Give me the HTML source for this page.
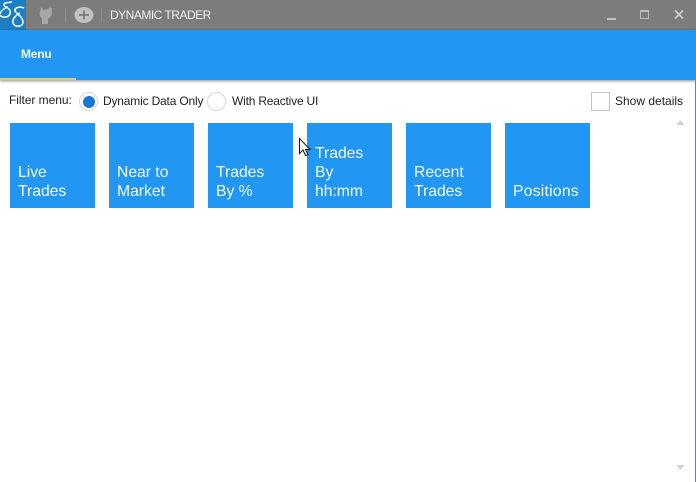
<!DOCTYPE html>
<html><head><meta charset="utf-8"><style>
html,body{margin:0;padding:0;background:#fff}
body{width:696px;height:482px;position:relative;overflow:hidden;font-family:"Liberation Sans",sans-serif}
.a{position:absolute}
.tile{position:absolute;top:123px;width:85px;height:85px;background:#2196f3;color:#f2f9ff}
.tile div{position:absolute;left:8px;bottom:7px;font-size:15.7px;line-height:19px;white-space:nowrap}
.lbl{position:absolute;font-size:12px;color:#222;line-height:14px;white-space:nowrap}
</style></head><body>
<div class="a" style="left:0;top:0;width:696px;height:30px;background:#7e7c7a"></div>
<div class="a" style="left:0;top:0;width:26px;height:30px;background:#1c7fc4"></div>
<svg class="a" style="left:0;top:0" width="120" height="30" fill="none">
<path d="M12 2L5 3C3 4 4 6 6 7C10 9 11 11 10 14C8 18 2 18 0 15" stroke="#fff" stroke-width="1.500"/>
<path d="M0 14C1 10 5 8 8 7" stroke="#fff" stroke-width="1.200"/>
<path d="M24 8C19 6 14 8 15 11C17 14 23 17 23 22C23 27 15 28 13 23C12 19 16 15 20 13" stroke="#fff" stroke-width="1.500"/>
<path d="M41 7L43 9.500H48L50 7L52 9L51.500 15Q50 18 48 18.500V24H42V18.500Q40 17 39.500 14Z" fill="#a9a7a5"/>
<rect x="65" y="8" width="1" height="14" fill="#8f8d8b"/>
<ellipse cx="84" cy="15" rx="9.500" ry="8" fill="#c4c2c0"/>
<path d="M79 15H89M84 10.500V19.500" stroke="#7e7c7a" stroke-width="1.800"/>
<rect x="101" y="8" width="1" height="14" fill="#8f8d8b"/>
</svg>
<div class="a" style="left:110px;top:8px;font-size:12px;line-height:14px;color:#efeeed;letter-spacing:-.5px">DYNAMIC TRADER</div>
<svg class="a" style="left:600px;top:0" width="96" height="30" fill="none">
<rect x="7" y="18" width="9" height="2" fill="#c4c2c0"/>
<rect x="40.500" y="10.500" width="8" height="8" stroke="#bdbbb9"/><rect x="40" y="10" width="9" height="2" fill="#bdbbb9"/>
<path d="M75 10.500L83 18.500M83 10.500L75 18.500" stroke="#d0cecc" stroke-width="1.700"/>
</svg>
<div class="a" style="left:0;top:30px;width:696px;height:50px;background:#2196f3;box-shadow:0 1px 3px rgba(0,0,0,.45)"></div>
<div class="a" style="left:0;top:78px;width:76px;height:2px;background:#e3c565"></div>
<div class="a" style="left:21px;top:47px;font-size:12px;line-height:14px;font-weight:bold;color:#f0f8ff;letter-spacing:-.2px">Menu</div>
<div class="lbl" style="left:9px;top:93px;letter-spacing:-.05px">Filter menu:</div>
<div class="a" style="left:79px;top:92px;width:17px;height:17px;border:1px solid #d8d8d8;border-radius:50%"></div>
<div class="a" style="left:82.500px;top:95.500px;width:12px;height:12px;background:#1976d2;border-radius:50%"></div>
<div class="lbl" style="left:103px;top:94px;letter-spacing:-.18px">Dynamic Data Only</div>
<div class="a" style="left:207px;top:92px;width:17px;height:17px;border:1px solid #d8d8d8;border-radius:50%"></div>
<div class="lbl" style="left:232px;top:94px;letter-spacing:-.2px">With Reactive UI</div>
<div class="a" style="left:591px;top:92px;width:17px;height:17px;border:1px solid #c4c4c4"></div>
<div class="lbl" style="left:615px;top:94px">Show details</div>
<div class="tile" style="left:10px"><div>Live<br>Trades</div></div>
<div class="tile" style="left:109px"><div>Near to<br>Market</div></div>
<div class="tile" style="left:208px"><div>Trades<br>By %</div></div>
<div class="tile" style="left:307px"><div>Trades<br>By<br>hh:mm</div></div>
<div class="tile" style="left:406px"><div>Recent<br>Trades</div></div>
<div class="tile" style="left:505px"><div style="letter-spacing:.25px">Positions</div></div>
<svg class="a" style="left:296px;top:136px" width="16" height="22"><path d="M3.500 2.500V17.500L7 14L9.500 19.500L12 18.500L9.500 13.500H14Z" fill="#fff" stroke="#111" stroke-width="1"/></svg>
<svg class="a" style="left:670px;top:112px" width="26" height="370">
<path d="M6.500 13L10.500 8L14.500 13Z" fill="#d0d0d0"/>
<path d="M6.500 353L10.500 358L14.500 353Z" fill="#d0d0d0"/>
</svg>
<div class="a" style="left:695px;top:80px;width:1px;height:402px;background:#2196f3"></div>
</body></html>
